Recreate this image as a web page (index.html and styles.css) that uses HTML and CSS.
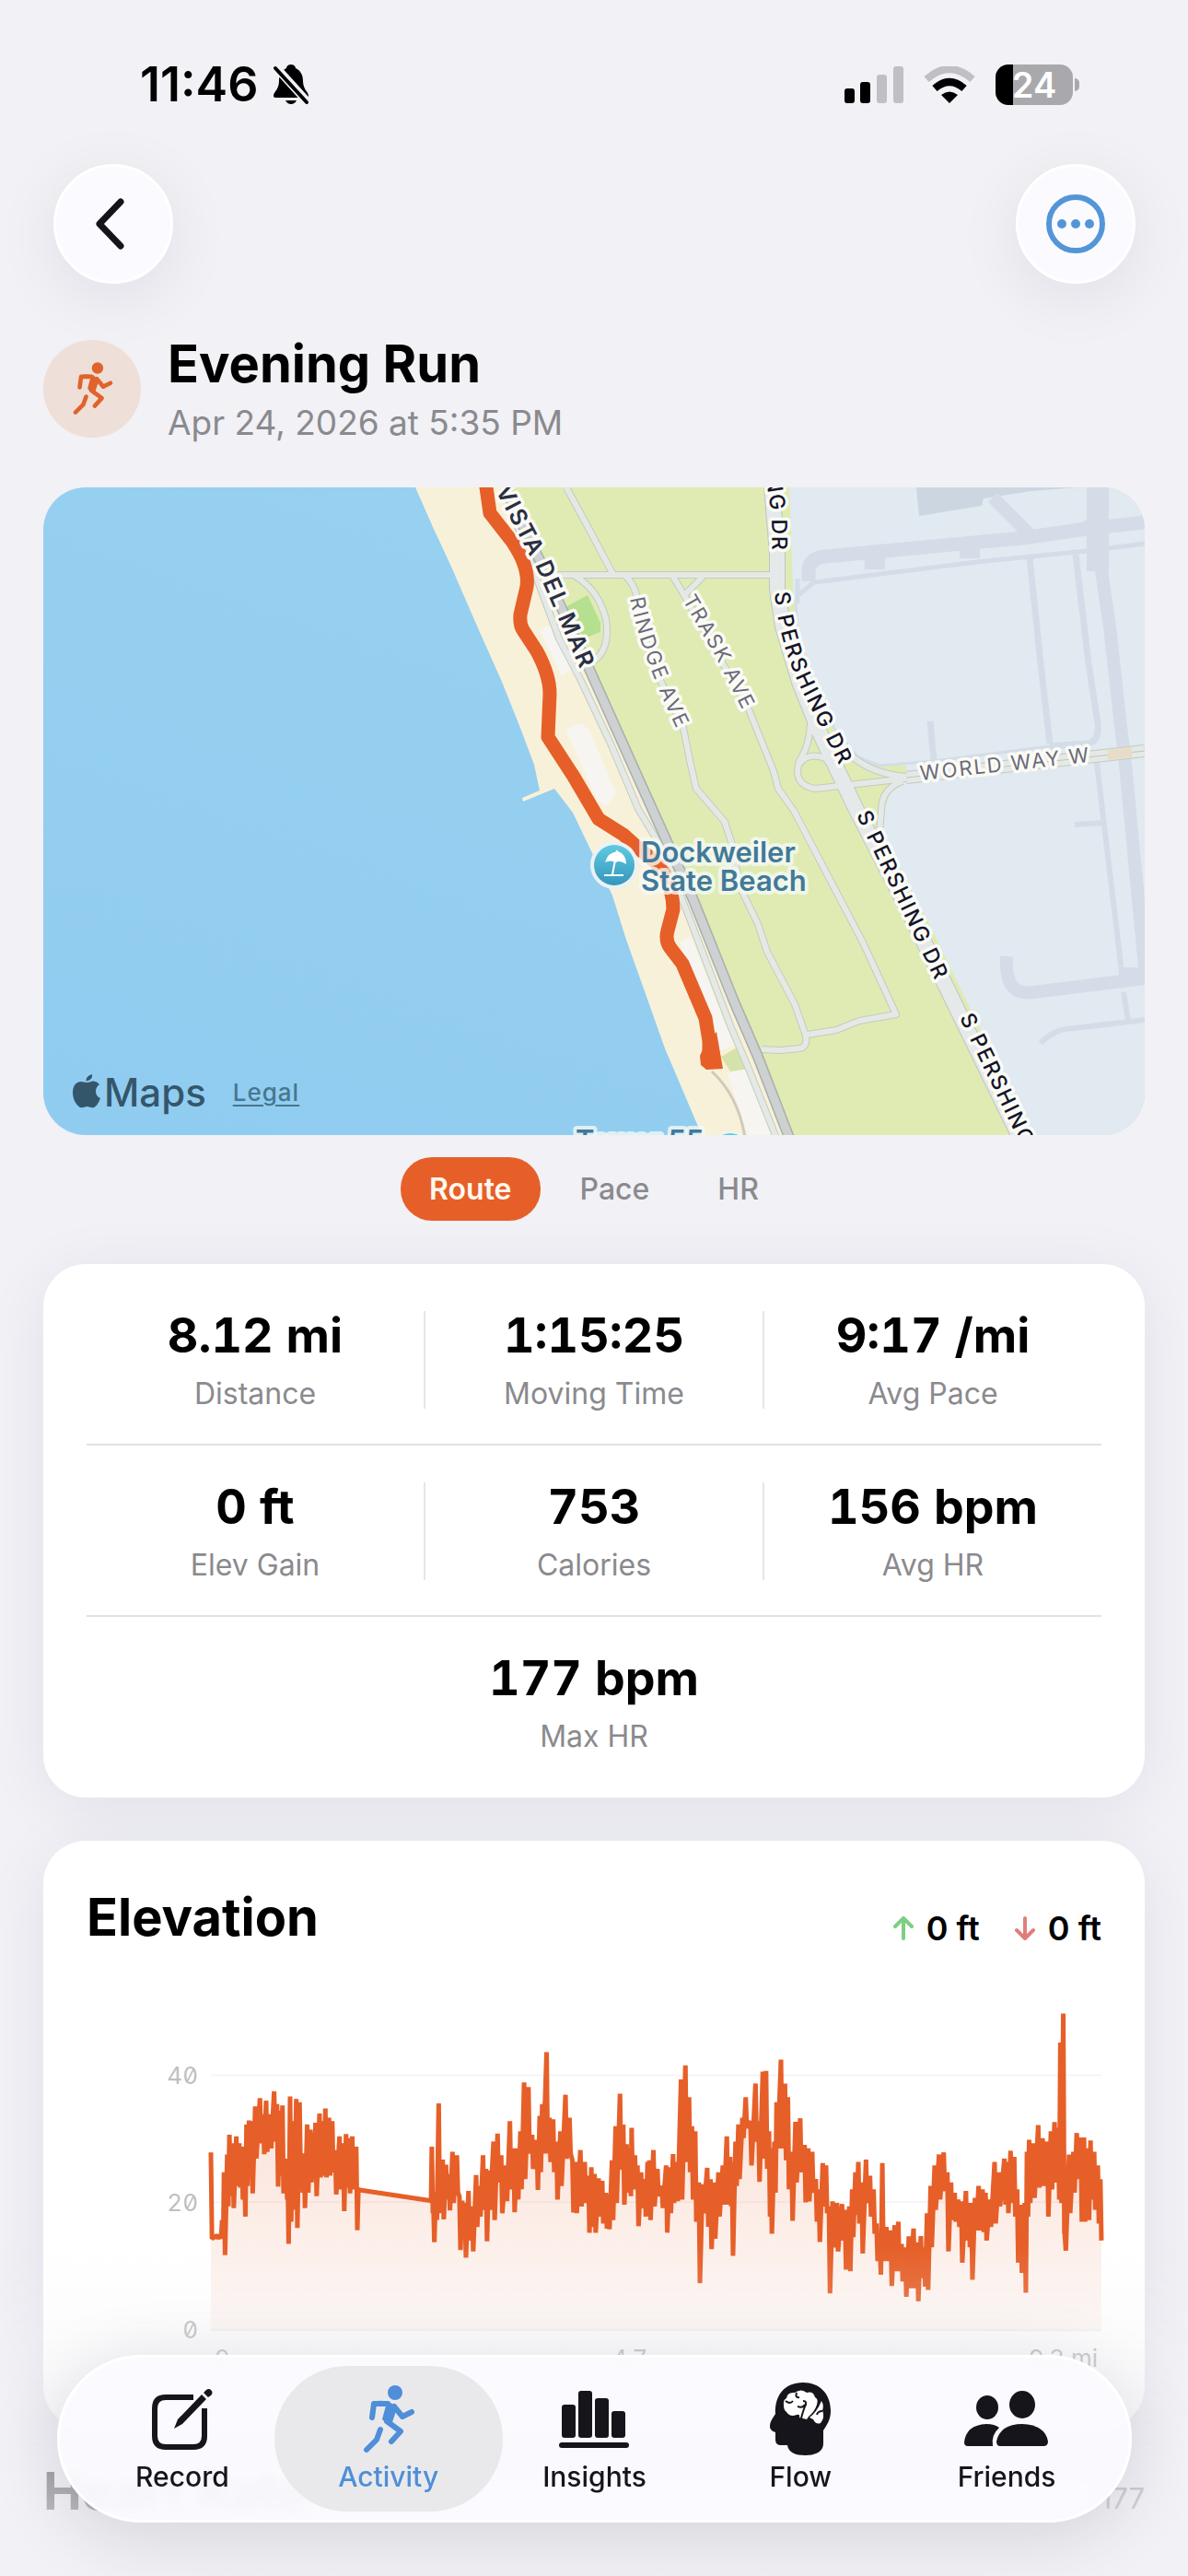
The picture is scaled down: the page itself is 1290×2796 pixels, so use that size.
FILE: index.html
```html
<!DOCTYPE html>
<html lang="en">
<head>
<meta charset="utf-8">
<meta name="viewport" content="width=device-width, initial-scale=1">
<title>Evening Run</title>
<link rel="stylesheet" href="styles.css">
</head>
<body>
<svg class="sprite" aria-hidden="true">
  <symbol id="runner" viewBox="0 0 58 74">
    <circle cx="36" cy="8" r="8"/>
    <path d="M12 18 Q22 15 31 19 Q36 21 38 25 L32 43 Q27 42 22 37 L26 22 L13 22 Z"/>
    <g fill="none" stroke="currentColor" stroke-width="6" stroke-linecap="round" stroke-linejoin="round">
      <path d="M11 35 L13 20 L28 20"/>
      <path d="M35 23 L44 34 L54 29"/>
      <path d="M27 39 L42 50 L32 61"/>
      <path d="M20 48 L16 59 L5 70" stroke-linejoin="round"/>
    </g>
  </symbol>
</svg>

<div class="status">
  <div class="status-left">
    <span class="clock">11:46</span>
    <svg width="40" height="44" viewBox="0 0 40 44" aria-label="Silent">
      <path d="M20 0 C24 0 25 3 25 4 C31 7 33 12 33 18 C33 27 39 30 39 34 Q39 36 36 36 H4 Q1 36 1 34 C1 30 7 27 7 18 C7 12 9 7 15 4 C15 3 16 0 20 0 Z M14 39 H26 Q24 43 20 43 Q16 43 14 39 Z"/>
      <path d="M0 -1 L40 43" stroke="#f1f1f6" stroke-width="9"/>
      <path d="M3 4 L37 41" stroke="#000" stroke-width="4" stroke-linecap="round"/>
    </svg>
  </div>
  <div class="status-right">
    <svg width="64" height="41" viewBox="0 0 64 41" aria-label="Signal">
      <rect x="0" y="24" width="11" height="16" rx="3"/><rect x="17" y="17" width="11" height="23" rx="3"/>
      <rect x="35" y="9" width="11" height="31" rx="3" fill="#c0c0c4"/><rect x="53" y="0" width="11" height="40" rx="3" fill="#c0c0c4"/>
    </svg>
    <svg width="56" height="41" viewBox="0 0 56 41" aria-label="Wi-Fi">
      <path d="M3 14 Q28 -8 53 14" fill="none" stroke="#c0c0c4" stroke-width="8"/>
      <path d="M12 24 Q28 10 44 24" fill="none" stroke="#000" stroke-width="8"/>
      <path d="M19 31 Q28 24 37 31 L28 40 Z"/>
    </svg>
    <div class="battery-wrap"><span class="battery">24</span><span class="nub"></span></div>
  </div>
</div>

<nav class="nav" aria-label="Page">
  <button class="round-btn" aria-label="Back">
    <svg width="32" height="56" viewBox="0 0 32 56"><path d="M28 4 L5 28 L28 52" fill="none" stroke="#141419" stroke-width="7" stroke-linecap="round" stroke-linejoin="round"/></svg>
  </button>
  <button class="round-btn" aria-label="More">
    <svg width="66" height="66" viewBox="0 0 66 66" fill="#5495d8"><circle cx="33" cy="33" r="29" fill="none" stroke="#5495d8" stroke-width="6"/><circle cx="18" cy="33" r="5"/><circle cx="33" cy="33" r="5"/><circle cx="48" cy="33" r="5"/></svg>
  </button>
</nav>

<main class="page">
  <header class="heading">
    <span class="badge"><svg width="45" height="58"><use href="#runner"/></svg></span>
    <div>
      <h1>Evening Run</h1>
      <p class="date">Apr 24, 2026 at 5:35 PM</p>
    </div>
  </header>

  <section class="map" aria-label="Route map">
    <svg class="map-art" viewBox="47 529 1196 703" preserveAspectRatio="xMidYMid slice">
      <defs>
        <linearGradient id="sea" x1="0" y1="1" x2=".6" y2="0"><stop offset="0" stop-color="#90ccf0"/><stop offset="1" stop-color="#98d1f0"/></linearGradient>
        <linearGradient id="pin" x1="0" y1="0" x2="0" y2="1"><stop offset="0" stop-color="#5fcbdf"/><stop offset="1" stop-color="#3596bd"/></linearGradient>
        <g id="streets">
          <path d="M602 624 H840"/>
          <path d="M615 529 L640 575 L666 624"/>
          <path d="M678 624 Q692 636 693 660 L708 720 L742 790 L750 830 L756 856 L787 892 L795 917 Q800 950 807 970 L823 1003 L833 1033 L863 1090 L875 1124 Q877 1137 868 1138 L847 1140 L827 1139"/>
          <path d="M731 626 L743 646 L763 626"/>
          <path d="M743 646 L813 770 L840 837 L845 856 L862 880 L937 1023 L973 1101 L933 1108 L908 1118 L876 1123"/>
          <path d="M624 625 Q650 640 658 672 Q663 705 644 718"/>
          <path d="M880 770 Q882 805 868 826 Q860 852 885 856 L984 845"/>
          <path d="M868 829 Q878 816 896 823 L912 842"/>
          <path d="M922 818 Q945 840 984 843"/>
          <path d="M980 848 Q957 856 957 880 L955 903"/>
          <path d="M560 566 L607 693 L630 737 L663 807 L693 878 L720 923 L750 1000 L793 1113 L813 1160 L843 1235"/>
        </g>
        <path id="p-vista" d="M546 528 L592 616 L650 750"/>
        <path id="p-rindge" d="M692 648 Q704 715 760 824"/>
        <path id="p-trask" d="M748 647 L784 709 L830 800"/>
        <path id="p-ng" d="M838 509 L846 560 L847 640"/>
        <path id="p-per1" d="M849 642 Q854 700 881 752 L936 862"/>
        <path id="p-per2" d="M937 881 L1042 1101"/>
        <path id="p-per3" d="M1049 1101 L1140 1290"/>
        <path id="p-world" d="M999 839 L1210 816"/>
      </defs>
      <rect x="47" y="529" width="1196" height="703" fill="url(#sea)"/>
      <path d="M451 529 L470 572 L490 615 L520 684 L545 740 L565 790 L580 830 L586 858 L567 866 L568 870 L602 856 L622 882 L645 930 L665 972 L680 1020 L700 1076 L722 1138 L745 1192 L762 1232 H1243 V529 Z" fill="#f8f1d9"/>
      <path d="M586 684 L600 677 L624 725 L610 734 Z M614 792 L632 785 L641 795 L669 862 L658 875 L648 868 Z M738 1023 L750 1016 L797 1135 L782 1140 Z M790 1166 L810 1157 L842 1232 H812 Z" fill="#f6f5f2"/>
      <path d="M783 1147 L800 1137 L814 1160 L793 1163 Z" fill="#d5e3ab"/>
      <path d="M546 529 L585 610 L643 733 L700 860 L753 977 L852 1232 H1110 L1243 1232 V529 Z" fill="#dfebb3"/>
      <path d="M612 660 L638 646 L652 676 L652 686 L634 693 Z" fill="#b4e090"/>
      <path d="M857 529 L861 640 L865 690 L882 742 L908 795 L932 822 L955 831 H984 V846 Q962 858 960 885 L958 905 L1010 1005 L1120 1232 H1243 V529 Z" fill="#e1e9f1"/>
      <path d="M995 529 H1170 L1120 533 L1068 541 L1066 549 L998 560 Z" fill="#cbd6e1"/>
      <g fill="none" stroke="#d4dde7" stroke-linejoin="round">
        <path d="M878 631 V618 Q880 605 897 604 L1110 584 L1180 574 L1243 567" stroke-width="15"/>
        <path d="M866 655 V628 M868 645 L884 632 L1060 610 L1180 598 L1243 590" stroke-width="5"/>
        <path d="M950 605 V618 M1053 595 V606" stroke-width="22"/>
        <path d="M1078 540 L1118 580 M1175 578 L1192 560" stroke-width="14"/>
        <path d="M1193 529 V600 L1205 680 L1216 780 L1222 830 L1243 1050" stroke-width="14"/>
        <path d="M1192 529 V620" stroke-width="24"/>
        <path d="M1168 602 L1182 720 L1192 785 Q1194 806 1180 807 L1140 810 M1118 605 L1130 720 L1140 807 M1010 783 L1014 825" stroke-width="7"/>
        <path d="M955 831 L1015 826 L1140 810 M864 650 L866 690 L883 742 L908 795 L932 822 L955 831" stroke-width="3"/>
        <path d="M1190 820 L1218 1055 M1167 895 L1197 893 M1220 1077 L1225 1108 M1130 1132 Q1143 1119 1157 1117 L1243 1107" stroke-width="6"/>
        <path d="M1093 1038 Q1090 1082 1122 1077 L1243 1062" stroke-width="14"/>
        <path d="M1215 1056 H1243" stroke-width="12"/>
      </g>
      <path d="M984 844 L1243 815" class="street-case wide"/>
      <path d="M984 844 L1243 815" class="street wide"/>
      <path d="M984 844 L1243 815" stroke="#bfc5c8" stroke-width="1"/>
      <path d="M1203 814 L1229 811 V822 L1203 825 Z" fill="#e8dcc8"/>
      <use href="#streets" class="street-case"/>
      <path class="main-case" d="M838 529 L844 600 V640 L850 680 L868 740 L890 795 L928 875 L987 990 L1027 1070 L1110 1240"/>
      <use href="#streets" class="street"/>
      <path class="main-road" d="M838 529 L844 600 V640 L850 680 L868 740 L890 795 L928 875 L987 990 L1027 1070 L1110 1240"/>
      <path class="vista-case" d="M548 529 L587 610 L643 733 L700 860 L753 977 L797 1087 L823 1147 L857 1235"/>
      <path class="vista" d="M548 529 L587 610 L643 733 L700 860 L753 977 L797 1087 L823 1147 L857 1235"/>
      <path d="M773 1163 Q802 1190 809 1235" fill="none" stroke="#cfc9bb" stroke-width="3"/>

      <path class="route" d="M527 522 L532 557 L557 589 Q575 616 572 637 L565 667 Q564 678 568 684 L583 707 Q597 733 597 753 L595 800 L623 843 L650 889 L677 906 L697 924 Q730 945 731 987 L725 1010 Q722 1021 728 1029 L741 1046 L766 1105 L770 1130 V1150"/>
      <path d="M760 1146 L766 1132 L778 1120 L785 1160 L767 1161 L761 1156 Z" fill="#e65f28"/>

      <g class="road-label strong"><text><textPath href="#p-vista">VISTA DEL MAR</textPath></text></g>
      <g class="road-label soft">
        <text><textPath href="#p-rindge">RINDGE AVE</textPath></text>
        <text><textPath href="#p-trask">TRASK AVE</textPath></text>
        <text><textPath href="#p-world">WORLD WAY W</textPath></text>
      </g>
      <g class="road-label dark">
        <text><textPath href="#p-ng">ING DR</textPath></text>
        <text><textPath href="#p-per1">S PERSHING DR</textPath></text>
        <text><textPath href="#p-per2">S PERSHING DR</textPath></text>
        <text><textPath href="#p-per3">S PERSHING</textPath></text>
      </g>
      <g class="place">
        <text x="696" y="936">Dockweiler</text>
        <text x="696" y="967">State Beach</text>
        <text x="625" y="1249">Tower 55</text>
      </g>
      <circle cx="667" cy="939" r="26" fill="#eaf2f6"/>
      <circle cx="667" cy="939" r="22" fill="url(#pin)"/>
      <path d="M657 936 Q660 925 671 924 Q680 927 680 938 Q673 933 669 936 Q662 933 657 936 Z" fill="#fff"/>
      <path d="M670 923 L665 949 M656 950 H677" stroke="#fff" stroke-width="2"/>
      <circle cx="793" cy="1252" r="24" fill="#eef5f6"/><circle cx="793" cy="1250" r="20" fill="#5fcbdf"/>
    </svg>
    <div class="attribution">
      <span class="maps-logo">
        <svg width="30" height="37" viewBox="0 0 30 37" aria-label="Apple"><path d="M15 9 C19 9 20 7 23 7.500 Q27 8 29 11 Q25 14 25 18.500 Q25 24 30 26 Q27 34 23 36 C20 37 18 35 15.500 35 C13 35 11 37 8 36 C3 33 0 26 0 20 C0 12 4 8 9 8 C12 8 13 9 15 9 Z M14.500 7.500 Q14 2 21 0 Q22 6 14.500 7.500 Z"/></svg>
        <span>Maps</span>
      </span>
      <a class="legal" href="#legal">Legal</a>
    </div>
  </section>

  <div class="modes" role="group" aria-label="Map colouring">
    <button class="mode active" aria-pressed="true">Route</button>
    <button class="mode">Pace</button>
    <button class="mode">HR</button>
  </div>

  <section class="card stats" aria-label="Summary">
    <dl class="row">
      <div class="stat"><dd>8.12 mi</dd><dt>Distance</dt></div>
      <div class="stat"><dd>1:15:25</dd><dt>Moving Time</dt></div>
      <div class="stat"><dd>9:17 /mi</dd><dt>Avg Pace</dt></div>
    </dl>
    <dl class="row">
      <div class="stat"><dd>0 ft</dd><dt>Elev Gain</dt></div>
      <div class="stat"><dd>753</dd><dt>Calories</dt></div>
      <div class="stat"><dd>156 bpm</dd><dt>Avg HR</dt></div>
    </dl>
    <dl class="row">
      <div class="stat"><dd>177 bpm</dd><dt>Max HR</dt></div>
    </dl>
  </section>

  <section class="card elevation">
    <div class="card-head">
      <h2>Elevation</h2>
      <div class="totals">
        <span class="total"><svg class="up" width="22" height="26" viewBox="0 0 22 26"><path d="M11 24 V3 M2 11 L11 2 L20 11"/></svg>0 ft</span>
        <span class="total"><svg class="down" width="22" height="26" viewBox="0 0 22 26"><path d="M11 2 V23 M2 15 L11 24 L20 15"/></svg>0 ft</span>
      </div>
    </div>
    <div class="chart">
      <div class="y-axis"><span>40</span><span>20</span><span>0</span></div>
      <svg class="plot" viewBox="478 540 2451 945" preserveAspectRatio="none" role="img" aria-label="Elevation in feet over distance">
        <defs><linearGradient id="fill" gradientUnits="userSpaceOnUse" x1="0" y1="700" x2="0" y2="1485"><stop offset="0" stop-color="#e65f28" stop-opacity=".2"/><stop offset="1" stop-color="#e65f28" stop-opacity=".05"/></linearGradient></defs>
        <path class="grid-line" d="M478 736 H2929 M478 1108 H2929 M478 1483 H2929"/>
        <path id="area" fill="url(#fill)"/>
        <path id="line"/>
      </svg>
      <div class="x-axis"><span>0</span><span>4.7</span><span>9.3 mi</span></div>
    </div>
  </section>

  <section class="next">
    <h2>Heart Rate</h2>
    <span>177</span>
  </section>
</main>

<div class="fade"></div>
<nav class="tabs" aria-label="Main">
  <button class="tab">
    <span class="icon"><svg width="66" height="68" viewBox="0 0 66 68"><path d="M45 10 H15 Q3 10 3 22 V52 Q3 64 15 64 H45 Q57 64 57 52 V22" fill="none" stroke="currentColor" stroke-width="6"/><path d="M24 44 L28 34 L54 7 L59 12 L33 39 Z M56 5 L59 2 Q62 0 64 2 Q67 5 64 8 L61 10 Z"/></svg></span>
    Record
  </button>
  <button class="tab current" aria-current="page">
    <span class="icon"><svg width="58" height="74"><use href="#runner"/></svg></span>
    Activity
  </button>
  <button class="tab">
    <span class="icon"><svg width="76" height="64" viewBox="0 0 76 64"><rect x="3" y="16" width="15" height="36" rx="3"/><rect x="21" y="1" width="15" height="51" rx="3"/><rect x="39" y="9" width="15" height="43" rx="3"/><rect x="57" y="23" width="15" height="29" rx="3"/><rect x="0" y="57" width="76" height="6" rx="3"/></svg></span>
    Insights
  </button>
  <button class="tab">
    <span class="icon"><svg width="66" height="80" viewBox="0 0 66 80"><path d="M36 0 C54 0 66 12 66 31 C66 40 62 46 58 52 V66 C58 76 48 79 38 79 C28 79 20 76 19 68 H12 Q6 68 6 62 V54 Q0 52 0 48 C0 42 3 39 6 34 C5 14 16 0 36 0 Z"/><path d="M15 25 Q14 19 18 17 Q19 10 27 11 Q34 6 40 11 Q47 9 49 16 Q53 18 51 24 Q49 31 42 37 L40 40 L32 38 Q33 34 29 35 Q22 38 18 32 Q15 30 15 25 Z M56 20 Q59 25 57 30 Q60 38 55 44 Q50 46 47 40 L43 38 Q51 32 56 20 Z" fill="#fff"/><path d="M17 20 Q22 24 25 20 M29 11 Q27 17 32 16 M36 20 Q41 20 38 26 Q35 34 34 39 M30 26 Q36 28 38 24 M57 31 Q52 31 51 35" fill="none" stroke="currentColor" stroke-width="2"/></svg></span>
    Flow
  </button>
  <button class="tab">
    <span class="icon"><svg width="92" height="62" viewBox="0 0 92 62"><ellipse cx="25" cy="18" rx="12" ry="13"/><path d="M0 56 Q2 37 24 36 Q33 36 38 40 Q29 48 31 60 H4 Q0 60 0 56 Z"/><ellipse cx="63" cy="15" rx="14" ry="15"/><path d="M35 55 Q39 36 63 36 Q88 37 91 55 Q91 60 86 60 H39 Q35 60 35 55 Z"/></svg></span>
    Friends
  </button>
</nav>
<script src="script.js"></script>
</body>
</html>
```
FILE: styles.css
```css
* { box-sizing: border-box; }

body {
  margin: 0;
  min-height: 100vh;
  background: #f1f1f6;
  color: #000;
  font-family: Inter, "Liberation Sans", sans-serif;
  font-size: 32px;
}

h1, h2, p, dl, dd, dt { margin: 0; }
button { border: 0; padding: 0; background: none; font: inherit; color: inherit; }
svg { display: block; }
.sprite { position: absolute; width: 0; height: 0; }

/* Status bar */
.status {
  display: flex;
  justify-content: space-between;
  align-items: center;
  height: 178px;
  padding: 6px 118px 0 152px;
}
.status-left, .status-right { display: flex; align-items: center; }
.status-left { gap: 16px; }
.status-right { gap: 22px; }
.clock { font-size: 52px; line-height: 60px; font-weight: 600; }
.battery-wrap { display: flex; align-items: center; gap: 2px; }
.battery {
  width: 84px;
  border-radius: 14px;
  background: linear-gradient(90deg, #000 19px, #a9a9ad 19px);
  color: #fff;
  font-size: 38px;
  line-height: 44px;
  font-weight: 600;
  text-align: center;
}
.nub { width: 5px; height: 14px; border-radius: 0 5px 5px 0; background: #a9a9ad; }

/* Navigation buttons */
.nav { display: flex; justify-content: space-between; padding: 0 57px 0 58px; }
.round-btn {
  display: flex;
  align-items: center;
  justify-content: center;
  width: 130px;
  height: 130px;
  border-radius: 50%;
  border: 3px solid #fff;
  background: #fbfbff;
  box-shadow: 0 14px 70px rgba(20, 20, 40, .08);
}
.round-btn:first-child svg { margin-right: 8px; }

.page { padding: 61px 47px 0; }

/* Heading */
.heading { display: flex; align-items: center; gap: 29px; height: 106px; margin-bottom: 54px; }
.badge {
  display: flex;
  align-items: center;
  justify-content: center;
  width: 106px;
  height: 106px;
  border-radius: 50%;
  background: #efdfd9;
  color: #e0632c;
  fill: currentColor;
}
h1, h2 { font-size: 56px; line-height: 64px; font-weight: 700; }
.date { color: #8a8a8e; font-size: 37px; line-height: 44px; margin-top: 10px; }

/* Map */
.map { position: relative; overflow: hidden; border-radius: 46px; aspect-ratio: 1196 / 703; }
.map-art { width: 100%; height: 100%; }
.street-case, .street { fill: none; stroke-linejoin: round; }
.street-case { stroke: #c3cbc0; stroke-width: 8px; }
.street { stroke: #e5e9e6; stroke-width: 6px; }
.street-case.wide { stroke-width: 14px; }
.street.wide { stroke-width: 12px; }
.main-case, .main-road, .vista-case, .vista { fill: none; stroke-linejoin: round; }
.main-case { stroke: #bfc5bf; stroke-width: 18px; }
.main-road { stroke: #e6e9ea; stroke-width: 16px; }
.vista-case { stroke: #a9afad; stroke-width: 12px; }
.vista { stroke: #cdd1d2; stroke-width: 9px; }
.route { fill: none; stroke: #e65f28; stroke-width: 15px; stroke-linejoin: round; }
.road-label text {
  font-size: 22px;
  letter-spacing: 2px;
  dominant-baseline: central;
  paint-order: stroke;
  stroke: #fbfbf6;
  stroke-width: 7px;
  stroke-linejoin: round;
}
.road-label.strong text { font-weight: 600; fill: #2b2f42; font-size: 25px; }
.road-label.soft text { fill: #6a6a78; }
.road-label.dark text { font-weight: 500; fill: #14142a; font-size: 23px; }
.place text {
  font-size: 31px;
  font-weight: 600;
  fill: #41799a;
  paint-order: stroke;
  stroke: rgba(245, 250, 245, .8);
  stroke-width: 8px;
  stroke-linejoin: round;
}
.attribution {
  position: absolute;
  left: 32px;
  bottom: 18px;
  display: flex;
  align-items: center;
  gap: 29px;
}
.maps-logo { display: flex; align-items: center; gap: 4px; color: #34566b; fill: #34566b; font-size: 42px; line-height: 56px; font-weight: 500; }
.maps-logo svg { margin-bottom: 4px; }
.legal { color: #47768f; font-size: 26px; line-height: 32px; font-weight: 500; text-underline-offset: 4px; letter-spacing: 1px; }

/* Map modes */
.modes { display: flex; justify-content: center; gap: 12px; margin: 24px 0 47px; }
.mode { height: 69px; padding: 0 31px; border-radius: 34px; color: #8a8a8e; font-size: 32px; font-weight: 500; }
.mode.active { background: #e65f28; color: #fff8ee; font-weight: 600; }

/* Cards */
.card { border-radius: 46px; background: #fff; box-shadow: 0 10px 70px rgba(30, 20, 70, .07); }
.stats { padding: 11px 47px 12px; margin-bottom: 47px; }
.row { display: flex; padding: 40px 0 38px; }
.row + .row { border-top: 2px solid #e2e2e4; }
.stat { flex: 1; display: flex; flex-direction: column; gap: 20px; text-align: center; }
.stat + .stat { border-left: 2px solid #e6e6e8; }
.stat dd { font-size: 52px; line-height: 54px; font-weight: 700; font-variant-numeric: tabular-nums; }
.stat dt { font-size: 32px; line-height: 32px; color: #8a8a8e; }

/* Elevation */
.elevation { padding: 51px 47px 60px; }
.card-head { display: flex; justify-content: space-between; align-items: flex-end; }
.totals { display: flex; gap: 38px; }
.total { display: flex; align-items: center; gap: 14px; font-size: 36px; line-height: 40px; font-weight: 600; }
.total path { fill: none; stroke-width: 4px; stroke-linecap: round; stroke-linejoin: round; }
.up path { stroke: #7fce83; }
.down path { stroke: #df7f7c; }
.chart {
  display: grid;
  grid-template-columns: 121px 1fr;
  column-gap: 14px;
  margin-top: 67px;
  color: #bfbfc3;
  font-size: 26px;
}
.y-axis {
  display: flex;
  flex-direction: column;
  justify-content: space-between;
  height: 306px;
  margin-top: 58px;
  line-height: 30px;
  text-align: right;
  font-feature-settings: "zero", "tnum";
}
.plot, .y-axis { grid-row: 1; }
.plot { grid-column: 2; width: 100%; height: 350px; overflow: visible; }
.grid-line { fill: none; stroke: #f5f5f6; stroke-width: 2px; vector-effect: non-scaling-stroke; }
#line { fill: none; stroke: #e65f28; stroke-width: 5px; stroke-linejoin: bevel; vector-effect: non-scaling-stroke; }
.x-axis { grid-column: 2; display: flex; justify-content: space-between; padding: 0 4px; line-height: 32px; }

/* Next section header */
.next { display: flex; justify-content: space-between; align-items: flex-end; margin-top: 36px; }
.next h2 { color: #333; }
.next span { color: #8a8a8e; font-size: 31px; line-height: 48px; }

/* Tab bar */
.fade {
  position: fixed;
  inset: auto 0 0 0;
  height: 360px;
  background: linear-gradient(rgba(244, 244, 248, 0), rgba(242, 242, 247, .7) 80%);
  pointer-events: none;
}
.tabs {
  position: fixed;
  left: 62px;
  right: 61px;
  bottom: 58px;
  display: flex;
  height: 182px;
  padding: 9px 21px;
  border: 3px solid #fff;
  border-radius: 91px;
  background: rgba(251, 251, 255, .9);
  backdrop-filter: blur(7px);
  box-shadow: 0 14px 80px rgba(20, 20, 40, .14);
  color: #15151b;
}
.tab {
  flex: 1;
  display: flex;
  flex-direction: column;
  align-items: center;
  padding-top: 14px;
  border-radius: 79px;
  font-size: 30px;
  line-height: 36px;
  font-weight: 500;
}
.tab.current { margin: 0 -12px; padding-left: 12px; padding-right: 12px; background: #e9e9ec; color: #4f8ed8; }
.icon { display: flex; align-items: center; justify-content: center; height: 88px; fill: currentColor; }
```
FILE: script.js
```js
// Elevation samples: x, highest and lowest point of the trace around x.
const samples = [
  478,962,1215, 495,1205,1215, 503,1203,1214, 509,1160,1215, 514,1020,1263, 523,968,1120, 529,910,1090, 538,935,1125, 548,915,1060,
  556,935,1065, 563,945,1100, 570,1000,1150, 576,880,1060, 583,868,1020, 590,870,1082, 600,827,980, 613,803,935, 622,850,967,
  630,810,960, 641,850,950, 652,783,930, 660,820,1062, 668,840,1030, 675,824,1082, 685,980,1100, 689,1000,1230, 696,798,1165,
  705,870,1130, 713,805,1183, 722,815,1020, 728,1000,1080, 734,965,1125, 743,880,1080, 752,895,1050, 760,905,1015, 766,875,1090,
  777,848,1035, 787,870,1030, 793,833,1035, 803,860,1030, 812,870,1020, 820,955,1085, 832,915,1070, 842,935,1134, 850,908,1065,
  858,920,1082, 867,915,1070, 878,945,1190, 884,1069,1072, 1081,1103,1104, 1086,945,1140, 1090,1100,1225, 1097,1080,1160,
  1105,818,1140, 1116,983,1158, 1125,998,1100, 1133,1025,1132, 1143,960,1110, 1155,970,1080, 1162,1090,1248, 1170,1103,1200,
  1177,1110,1270, 1187,1075,1220, 1197,1120,1252, 1208,1028,1180, 1217,1060,1150, 1227,970,1130, 1235,1010,1222, 1243,1015,1130,
  1256,930,1160, 1267,907,1050, 1277,970,1140, 1290,1000,1105, 1301,870,1070, 1311,950,1137, 1321,950,1100, 1330,900,1070,
  1340,757,1040, 1352,770,965, 1362,910,1010, 1375,925,1072, 1383,855,1020, 1390,820,965, 1402,668,965, 1410,860,990,
  1420,865,1020, 1429,930,1100, 1440,900,1060, 1454,793,980, 1465,860,965, 1473,985,1138, 1482,990,1140, 1495,955,1120,
  1507,990,1110, 1517,1030,1197, 1525,1005,1180, 1534,1025,1197, 1545,1038,1150, 1555,1045,1170, 1565,1080,1185,
  1572,1085,1187, 1582,985,1160, 1592,885,1110, 1604,790,1012, 1613,880,1115, 1622,938,1080, 1631,950,1090, 1636,890,1070,
  1645,970,1070, 1652,1000,1178, 1662,1020,1125, 1672,1040,1150, 1680,990,1120, 1685,985,1160, 1696,955,1120, 1707,1010,1090,
  1719,1060,1125, 1731,1000,1197, 1741,1005,1140, 1750,967,1110, 1760,990,1105, 1772,748,1100, 1784,707,990, 1794,800,1020,
  1802,885,1100, 1811,900,1165, 1821,1050,1345, 1831,1055,1140, 1844,1007,1180, 1853,1040,1245, 1863,1050,1215, 1875,1020,1150,
  1887,1000,1115, 1898,915,1115, 1907,975,1120, 1912,990,1265, 1922,930,1060, 1930,880,1040, 1941,860,920, 1950,800,890,
  1963,870,1000, 1977,760,930, 1985,870,1048, 1997,725,980, 2006,723,1010, 2014,900,1150, 2019,950,1200, 2029,930,1080,
  2035,815,950, 2047,690,950, 2058,760,985, 2066,800,1070, 2076,960,1162, 2087,872,1050, 2100,862,1020, 2112,940,1108,
  2122,950,1105, 2133,960,1080, 2143,1040,1165, 2151,1070,1224, 2162,993,1120, 2171,1000,1140, 2179,1120,1375, 2189,1105,1240,
  2201,1110,1252, 2215,1113,1220, 2223,1130,1305, 2235,1120,1310, 2243,1070,1210, 2252,1020,1145, 2260,990,1170, 2269,1050,1258,
  2281,983,1110, 2292,1030,1150, 2302,1070,1200, 2310,1170,1280, 2319,1230,1320, 2326,993,1280, 2337,1180,1280, 2349,1190,1353,
  2360,1175,1310, 2370,1165,1310, 2379,1230,1340, 2389,1240,1385, 2399,1208,1360, 2412,1185,1360, 2422,1225,1398, 2432,1207,1330,
  2441,1240,1355, 2449,1140,1365, 2459,1060,1240, 2470,1000,1130, 2482,968,1100, 2495,962,1075, 2505,1020,1252, 2515,1050,1160,
  2525,1080,1165, 2535,1100,1180, 2543,1105,1285, 2556,1075,1220, 2564,1110,1240, 2571,1110,1335, 2581,1095,1190, 2591,1060,1190,
  2602,1070,1195, 2610,1080,1220, 2622,1100,1180, 2635,990,1170, 2647,1020,1120, 2662,980,1115, 2670,990,1140, 2679,957,1110,
  2689,975,1150, 2697,1070,1285, 2707,1115,1315, 2718,1110,1373, 2724,960,1150, 2730,925,1110, 2742,935,1095, 2755,882,1065,
  2767,920,1060, 2780,930,1150, 2790,900,1070, 2800,873,1050, 2810,890,1100, 2816,640,1110, 2824,555,1200, 2828,1200,1250,
  2840,968,1140, 2852,960,1080, 2861,905,1040, 2872,918,1165, 2881,918,1165, 2892,950,1160, 2899,927,1100, 2909,960,1130,
  2919,1000,1170, 2926,1040,1220
];

let trace = "";
for (let i = 0; i < samples.length; i += 3) {
  const [x, high, low] = samples.slice(i, i + 3);
  trace += `${i ? "L" : "M"}${x} ${high}L${x + 3} ${low}`;
}
document.getElementById("line").setAttribute("d", trace);
document.getElementById("area").setAttribute("d", `${trace}V1483H478Z`);
```
